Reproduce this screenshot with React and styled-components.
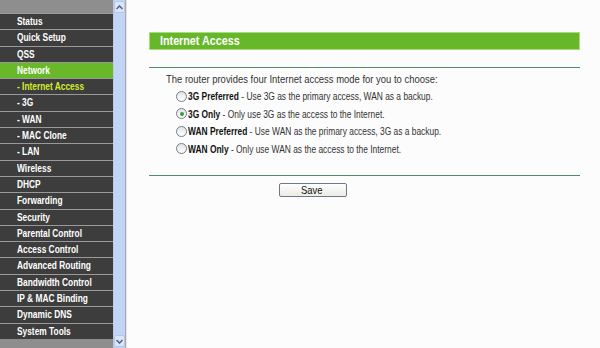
import React, { useState } from "react";
import styled, { createGlobalStyle } from "styled-components";

const GlobalStyle = createGlobalStyle`
  html, body {
    margin: 0;
    padding: 0;
    background: #fcfcfc;
  }
  body {
    font-family: "Liberation Sans", Arial, sans-serif;
  }
`;

const Frame = styled.div`
  display: flex;
  width: 600px;
  height: 348px;
  overflow: hidden;
`;

const Sidebar = styled.div`
  display: flex;
  width: 113px;
  flex-direction: column;
  background: #8e8e8e;
  padding-top: 13px;
  box-sizing: border-box;
`;

const MenuItem = styled.div`
  height: 15.3px;
  line-height: 15.3px;
  border-top: 1px solid #9a9a9a;
  background: ${(p) => (p.$active ? "#68b82a" : "#3d3d3d")};
  color: ${(p) => (p.$current ? "#d4ec2c" : "#ffffff")};
  font-size: 11px;
  font-weight: bold;
  padding-left: 17px;
  white-space: nowrap;
`;

// the old screenshot is squeezed sideways, so text is narrowed to match
const Squeeze = styled.span`
  display: inline-block;
  white-space: nowrap;
  transform: scaleX(${(p) => p.$k});
  transform-origin: left center;
`;

const ScrollBar = styled.div`
  display: flex;
  flex-direction: column;
  width: 13px;
  background: #c3d5f6;
  border-left: 1px solid #b9c9e6;
  border-right: 1px solid #a9a9a9;
`;

const ScrollButton = styled.div`
  display: flex;
  align-items: center;
  justify-content: center;
  height: 12px;
  margin: 1px 0;
  background: #dbe6fb;
  border: 1px solid #b4c6ea;
  border-radius: 2px;
  box-sizing: border-box;
`;

const Track = styled.div`
  flex: 1;
`;

const Content = styled.div`
  flex: 1;
  padding: 32px 20px 0 22px;
  background: #fcfcfc;
  border-left: 1px solid #e6e6e6;
`;

const Panel = styled.div`
  width: 431px;
`;

const TitleBar = styled.div`
  height: 16px;
  line-height: 16px;
  background: #66b82a;
  border: 1px solid #a8dc7c;
  color: #ffffff;
  font-weight: bold;
  font-size: 12.5px;
  padding-left: 10px;
`;

const Rule = styled.div`
  height: 1px;
  background: #4e8c6c;
  margin-top: ${(p) => p.$top}px;
`;

const Intro = styled.div`
  font-size: 10.5px;
  color: #333;
  margin: 5px 0 0 17px;
`;

const Options = styled.div`
  display: flex;
  flex-direction: column;
  gap: 3.6px;
  margin: 4px 0 0 27px;
`;

const Option = styled.label`
  display: flex;
  align-items: center;
  height: 14px;
  font-size: 10.5px;
  color: #333;
  cursor: pointer;
`;

const Radio = styled.span`
  width: 11px;
  height: 11px;
  border: 1px solid #6e7f90;
  border-radius: 50%;
  background: linear-gradient(#e4e4e4, #ffffff);
  margin-right: 1px;
  display: flex;
  align-items: center;
  justify-content: center;
  box-sizing: border-box;
  flex-shrink: 0;
`;

const Dot = styled.span`
  width: 4px;
  height: 4px;
  border-radius: 50%;
  background: #3a9a3a;
`;

const Bold = styled.b`
  color: #111;
`;

const SaveRow = styled.div`
  display: flex;
  margin: 7px 0 0 130px;
`;

const SaveButton = styled.button`
  width: 68px;
  height: 14px;
  padding: 0;
  font-size: 10.5px;
  font-family: "Liberation Sans", Arial, sans-serif;
  color: #111;
  background: linear-gradient(#fefefe, #ecebe4);
  border: 1px solid #6a7a8a;
  border-radius: 2px;
  line-height: 12px;
`;

const menu = [
  { label: "Status" },
  { label: "Quick Setup" },
  { label: "QSS" },
  { label: "Network", active: true },
  { label: "- Internet Access", current: true },
  { label: "- 3G" },
  { label: "- WAN" },
  { label: "- MAC Clone" },
  { label: "- LAN" },
  { label: "Wireless" },
  { label: "DHCP" },
  { label: "Forwarding" },
  { label: "Security" },
  { label: "Parental Control" },
  { label: "Access Control" },
  { label: "Advanced Routing" },
  { label: "Bandwidth Control" },
  { label: "IP & MAC Binding" },
  { label: "Dynamic DNS" },
  { label: "System Tools" }
];

const modes = [
  { name: "3G Preferred", text: "Use 3G as the primary access, WAN as a backup." },
  { name: "3G Only", text: "Only use 3G as the access to the Internet." },
  { name: "WAN Preferred", text: "Use WAN as the primary access, 3G as a backup." },
  { name: "WAN Only", text: "Only use WAN as the access to the Internet." }
];

function Arrow({ down }) {
  return (
    <svg width="7" height="5" viewBox="0 0 7 5">
      <path
        d={down ? "M0.5 1 L3.5 4 L6.5 1" : "M0.5 4 L3.5 1 L6.5 4"}
        fill="none"
        stroke="#4d6185"
        strokeWidth="1.5"
      />
    </svg>
  );
}

export default function App() {
  const [mode, setMode] = useState(1);

  return (
    <>
      <GlobalStyle />
      <Frame>
        <Sidebar>
          {menu.map((item) => (
            <MenuItem
              key={item.label}
              $active={item.active}
              $current={item.current}
            >
              <Squeeze $k={0.76}>{item.label}</Squeeze>
            </MenuItem>
          ))}
        </Sidebar>
        <ScrollBar>
          <ScrollButton>
            <Arrow />
          </ScrollButton>
          <Track />
          <ScrollButton>
            <Arrow down />
          </ScrollButton>
        </ScrollBar>
        <Content>
          <Panel>
            <TitleBar>
              <Squeeze $k={0.86}>Internet Access</Squeeze>
            </TitleBar>
            <Rule $top={17} />
            <Intro>
              <Squeeze $k={0.9}>
                The router provides four Internet access mode for you to choose:
              </Squeeze>
            </Intro>
            <Options>
              {modes.map((m, i) => (
                <Option key={m.name} onClick={() => setMode(i)}>
                  <Radio>{mode === i && <Dot />}</Radio>
                  <Squeeze $k={0.8}>
                    <Bold>{m.name}</Bold> - {m.text}
                  </Squeeze>
                </Option>
              ))}
            </Options>
            <Rule $top={19} />
            <SaveRow>
              <SaveButton>
                <Squeeze $k={0.9}>Save</Squeeze>
              </SaveButton>
            </SaveRow>
          </Panel>
        </Content>
      </Frame>
    </>
  );
}
